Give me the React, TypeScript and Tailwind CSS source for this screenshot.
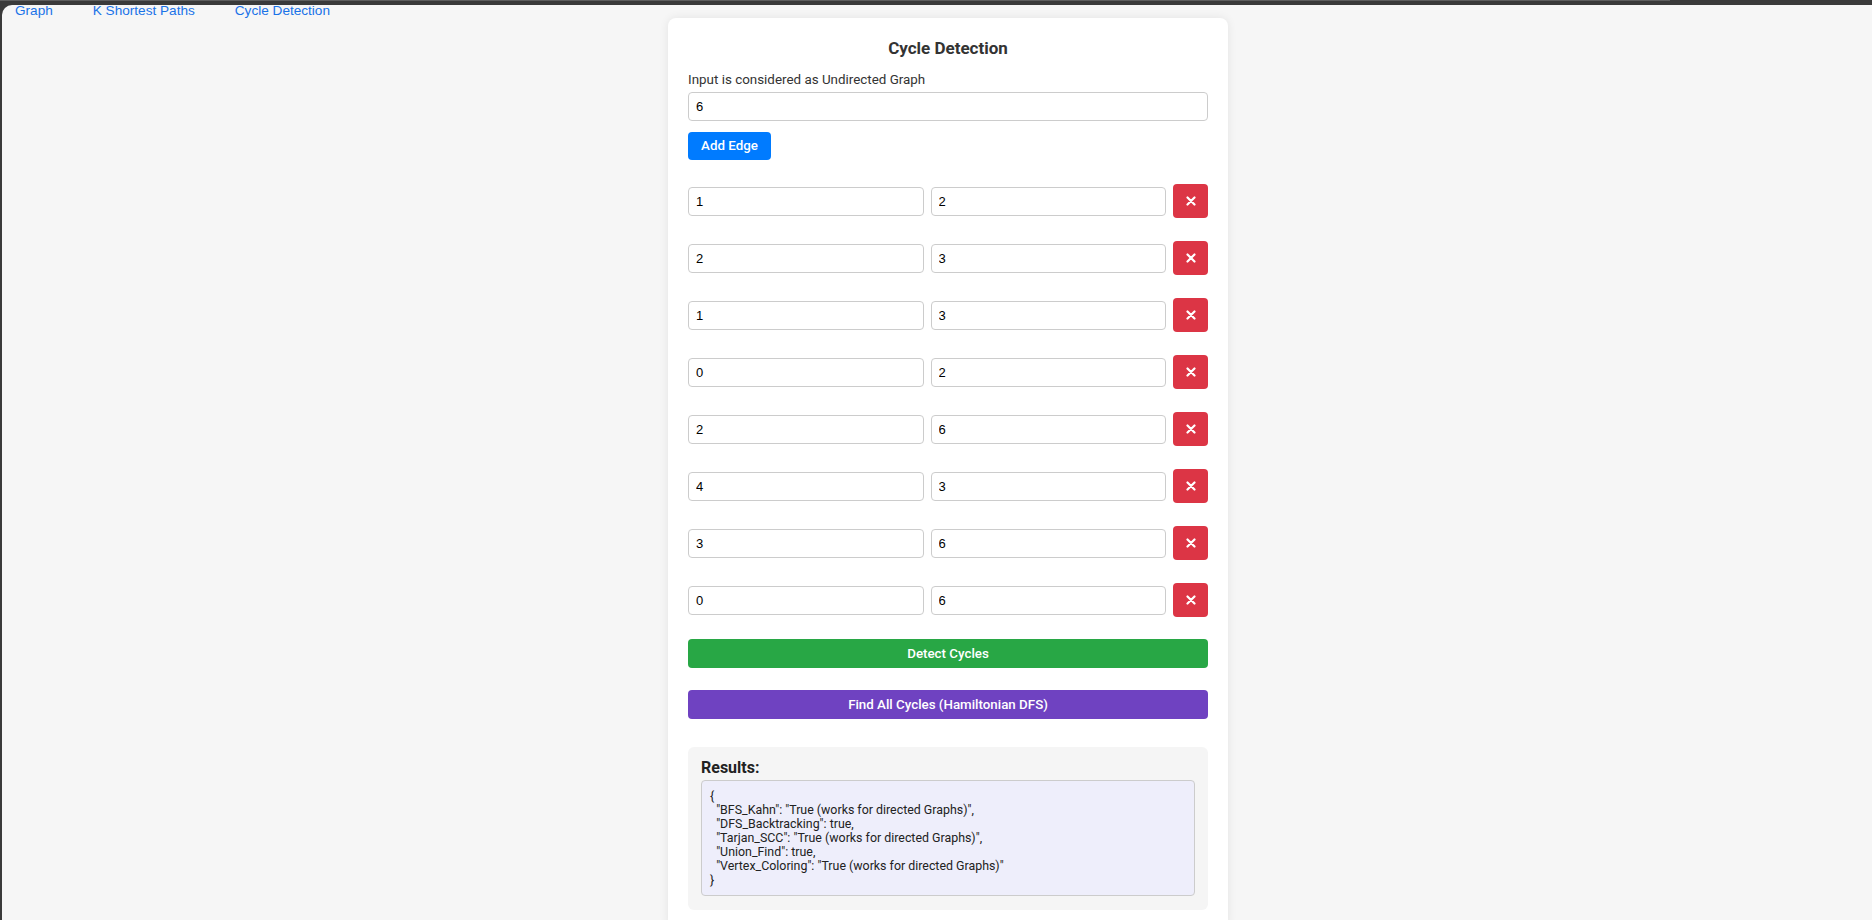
import { useState } from 'react';

type Edge = { from: string; to: string };

const initialEdges: Edge[] = [
  { from: '1', to: '2' },
  { from: '2', to: '3' },
  { from: '1', to: '3' },
  { from: '0', to: '2' },
  { from: '2', to: '6' },
  { from: '4', to: '3' },
  { from: '3', to: '6' },
  { from: '0', to: '6' },
];

const results = `{
  "BFS_Kahn": "True (works for directed Graphs)",
  "DFS_Backtracking": true,
  "Tarjan_SCC": "True (works for directed Graphs)",
  "Union_Find": true,
  "Vertex_Coloring": "True (works for directed Graphs)"
}`;

const inputClass =
  "h-[29px] rounded-[4px] border border-[#ccc] bg-white px-[7px] font-['Liberation_Sans',Arial,sans-serif] text-[13px] text-black outline-none";

const App = () => {
  const [vertices, setVertices] = useState('6');
  const [edges, setEdges] = useState<Edge[]>(initialEdges);

  const updateEdge = (i: number, key: keyof Edge, value: string) => {
    setEdges(prev => prev.map((e, j) => (j === i ? { ...e, [key]: value } : e)));
  };

  const removeEdge = (i: number) => {
    setEdges(prev => prev.filter((_, j) => j !== i));
  };

  return (
    <div className="flex h-[920px] flex-col overflow-hidden bg-[#3a3a3a]">
      {/* Browser frame top strip */}
      <div className="h-[5px] shrink-0">
        <div className="h-px w-[1670px] bg-[#5e5e5e]" />
      </div>

      <div className="flex min-h-0 flex-1">
        <div className="w-[2px] shrink-0" />
        <div className="flex-1 overflow-hidden rounded-tl-[10px] bg-[#f6f6f6]">
          {/* Nav (scrolled partly out of view) */}
          <nav className="-mt-[2px] flex h-[15px] gap-[40px] pl-[13px] font-['Liberation_Sans',Arial,sans-serif] text-[13.6px] leading-[16px] text-[#1a73e8]">
            <a href="#">Graph</a>
            <a href="#">K Shortest Paths</a>
            <a href="#">Cycle Detection</a>
          </nav>

          <div className="flex justify-center pl-[22px]">
            <div className="w-[560px] rounded-[8px] bg-white px-[20px] pt-[18px] pb-[20px] font-['Roboto',sans-serif] shadow-[0_0_10px_rgba(0,0,0,0.08)]">
              <h2 className="text-center text-[17px] font-bold leading-[24px] text-[#333]">Cycle Detection</h2>

              <label className="mt-[12px] block text-[13.4px] leading-[16px] text-[#333]">
                Input is considered as Undirected Graph
              </label>
              <input
                className={`${inputClass} mt-[4px] block w-full`}
                value={vertices}
                onChange={e => setVertices(e.target.value)}
              />

              <button
                className="mt-[11px] h-[28px] w-[83px] rounded-[4px] bg-[#007bff] text-[13.33px] font-medium text-white"
                onClick={() => setEdges(prev => [...prev, { from: '', to: '' }])}
              >
                Add Edge
              </button>

              {/* Edge list */}
              <div className="mt-[24px] flex flex-col gap-[23px]">
                {edges.map((edge, i) => (
                  <div key={i} className="flex h-[34px] items-center gap-[7px]">
                    <input
                      className={`${inputClass} min-w-0 flex-1`}
                      value={edge.from}
                      onChange={e => updateEdge(i, 'from', e.target.value)}
                    />
                    <input
                      className={`${inputClass} min-w-0 flex-1`}
                      value={edge.to}
                      onChange={e => updateEdge(i, 'to', e.target.value)}
                    />
                    <button
                      className="flex h-[34px] w-[35px] shrink-0 items-center justify-center rounded-[4px] bg-[#dc3545]"
                      onClick={() => removeEdge(i)}
                    >
                      <svg width="10" height="10" viewBox="0 0 10 10">
                        <path d="M1.5 1.5L8.5 8.5M8.5 1.5L1.5 8.5" stroke="white" strokeWidth="2.2" strokeLinecap="round" />
                      </svg>
                    </button>
                  </div>
                ))}
              </div>

              <button className="mt-[22px] block h-[29px] w-full rounded-[4px] bg-[#28a745] text-[13.33px] font-medium text-white">
                Detect Cycles
              </button>
              <button className="mt-[22px] block h-[29px] w-full rounded-[4px] bg-[#6f42c1] text-[13.33px] font-medium text-white">
                Find All Cycles (Hamiltonian DFS)
              </button>

              {/* Results */}
              <div className="mt-[28px] rounded-[6px] bg-[#f5f5f5] px-[13px] pt-[11px] pb-[14px]">
                <h3 className="text-[16px] font-bold leading-[19px] text-[#222]">Results:</h3>
                <pre className="mt-[3px] whitespace-pre rounded-[4px] border border-[#ccc] bg-[#eeeefb] p-[8px] font-['Roboto',sans-serif] text-[12.4px] leading-[14px] text-[#222]">
                  {results}
                </pre>
              </div>
            </div>
          </div>
        </div>
      </div>
    </div>
  );
};

export default App;
